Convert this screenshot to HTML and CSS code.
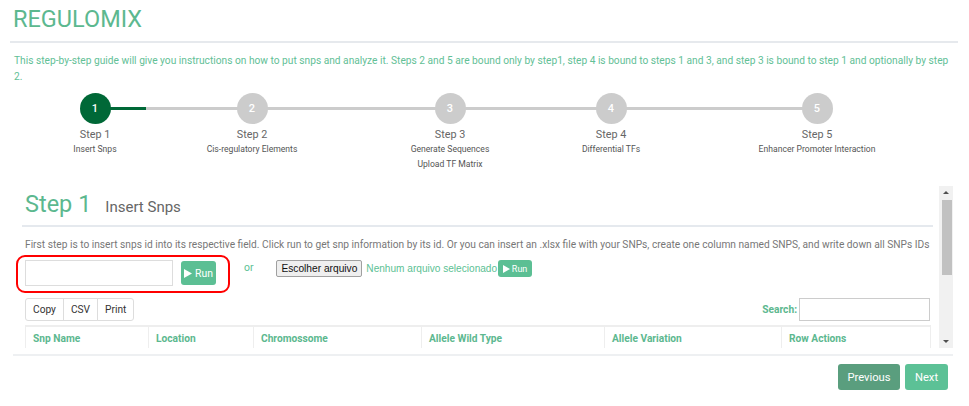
FILE: index.html
```html
<!DOCTYPE html>
<html lang="en">
<head>
<meta charset="utf-8">
<title>REGULOMIX</title>
<link rel="stylesheet" href="styles.css">
</head>
<body>
<div class="page">
  <h1 class="brand">REGULOMIX</h1>
  <hr class="rule">
  <p class="intro">This step-by-step guide will give you instructions on how to put snps and analyze it. Steps 2 and 5 are bound only by step1, step 4 is bound to steps 1 and 3, and step 3 is bound to step 1 and optionally by step 2.</p>

  <div class="stepper">
    <div class="track"><div class="track-fill"></div></div>
    <div class="step is-active">
      <div class="step-num">1</div>
      <div class="step-title">Step 1</div>
      <div class="step-sub">Insert Snps</div>
    </div>
    <div class="step">
      <div class="step-num">2</div>
      <div class="step-title">Step 2</div>
      <div class="step-sub">Cis-regulatory Elements</div>
    </div>
    <div class="step">
      <div class="step-num">3</div>
      <div class="step-title">Step 3</div>
      <div class="step-sub">Generate Sequences<br>Upload TF Matrix</div>
    </div>
    <div class="step">
      <div class="step-num">4</div>
      <div class="step-title">Step 4</div>
      <div class="step-sub">Differential TFs</div>
    </div>
    <div class="step">
      <div class="step-num">5</div>
      <div class="step-title">Step 5</div>
      <div class="step-sub">Enhancer Promoter Interaction</div>
    </div>
  </div>

  <div class="panel">
    <div class="panel-scroll">
      <div class="panel-inner">
        <div class="panel-head">
          <h2 class="panel-title">Step 1</h2>
          <span class="panel-sub">Insert Snps</span>
        </div>
        <p class="panel-text">First step is to insert snps id into its respective field. Click run to get snp information by its id. Or you can insert an .xlsx file with your SNPs, create one column named SNPS, and write down all SNPs IDs</p>

        <div class="snp-row">
          <div class="snp-box">
            <input class="snp-input" type="text">
            <button class="run-btn" type="button"><svg class="play" viewBox="0 0 8 9" width="8" height="9"><polygon points="0,0 8,4.5 0,9" fill="#fff"/></svg>Run</button>
          </div>
          <div class="file-group">
            <span class="or">or</span>
            <button class="file-btn" type="button">Escolher arquivo</button>
            <span class="file-name">Nenhum arquivo selecionado</span>
            <button class="run-btn run-btn-sm" type="button"><svg class="play" viewBox="0 0 8 9" width="7" height="8"><polygon points="0,0 8,4.5 0,9" fill="#fff"/></svg>Run</button>
          </div>
        </div>

        <div class="toolbar">
          <div class="btn-group">
            <button class="tool-btn" type="button">Copy</button>
            <button class="tool-btn" type="button">CSV</button>
            <button class="tool-btn" type="button">Print</button>
          </div>
          <label class="search">Search:<input class="search-input" type="text"></label>
        </div>

        <table class="snp-table">
          <colgroup>
            <col class="c1"><col class="c2"><col class="c3"><col class="c4"><col class="c5"><col class="c6">
          </colgroup>
          <thead>
            <tr>
              <th>Snp Name</th>
              <th>Location</th>
              <th>Chromossome</th>
              <th>Allele Wild Type</th>
              <th>Allele Variation</th>
              <th>Row Actions</th>
            </tr>
          </thead>
        </table>
      </div>
    </div>
    <div class="scrollbar" aria-hidden="true">
      <div class="sb-arrow sb-up"></div>
      <div class="sb-track"><div class="sb-thumb"></div></div>
      <div class="sb-arrow sb-down"></div>
    </div>
  </div>

  <div class="panel-foot">
    <button class="nav-btn nav-prev" type="button">Previous</button>
    <button class="nav-btn nav-next" type="button">Next</button>
  </div>
</div>
</body>
</html>
```

FILE: styles.css
```css
* { box-sizing: border-box; }
html, body { margin: 0; padding: 0; background: #fff; }
body { font-family: Roboto, "Liberation Sans", sans-serif; color: #555; }

.page { padding: 5px 11px 0 10px; }

.brand {
  margin: 0;
  padding-left: 3px;
  font-size: 23.5px;
  font-weight: 400;
  line-height: 28px;
  color: #5cb88f;
}

.rule { margin: 8px 0 0; border: 0; height: 2px; background: #e6e9ed; }

.intro {
  margin: 10px 4px 0;
  font-size: 10.2px;
  line-height: 16px;
  color: #62c096;
}

/* stepper */
.stepper {
  position: relative;
  display: flex;
  align-items: flex-start;
  margin-top: 8px;
}
.track {
  position: absolute;
  left: 85px;
  top: 14px;
  width: 722px;
  height: 3px;
  background: #cccccc;
}
.track-fill { width: 51px; height: 3px; background: #006837; }
.step {
  position: relative;
  z-index: 1;
  flex: none;
  width: 140px;
  display: flex;
  flex-direction: column;
  align-items: center;
}
.step:nth-child(2) { margin-left: 15px; }
.step:nth-child(3) { margin-left: 17px; }
.step:nth-child(4) { margin-left: 58px; }
.step:nth-child(5) { margin-left: 21px; }
.step:nth-child(6) { margin-left: 66px; }
.step-num {
  width: 31px;
  height: 31px;
  border-radius: 50%;
  background: #cccccc;
  color: #fff;
  font-size: 11px;
  font-weight: 500;
  display: flex;
  align-items: center;
  justify-content: center;
}
.step.is-active .step-num { background: #006837; }
.step-title { margin-top: 3px; font-size: 10.8px; line-height: 15px; color: #666; }
.step-sub { font-size: 8.6px; line-height: 15px; color: #555; text-align: center; }

/* panel */
.panel {
  display: flex;
  margin: 14px 5px 0 3px;
  padding-bottom: 6px;
  border-bottom: 2px solid #eef0f2;
}
.panel-scroll { flex: 1; height: 162px; overflow: hidden; }
.panel-inner { min-height: 289px; }

.scrollbar {
  flex: none;
  display: flex;
  flex-direction: column;
  width: 14px;
  height: 162px;
  margin-left: 1px;
  background: #f1f1f1;
}
.sb-arrow { position: relative; flex: none; height: 14px; }
.sb-arrow::before {
  content: "";
  position: absolute;
  left: 4px;
  top: 5px;
  border-left: 3px solid transparent;
  border-right: 3px solid transparent;
}
.sb-up::before { border-bottom: 3px solid #505050; }
.sb-down::before { top: 6px; border-top: 3px solid #505050; }
.sb-track { flex: 1; padding: 0 1px 0 3px; }
.sb-thumb { width: 10px; height: 75px; background: #c1c1c1; }

.panel-head {
  display: flex;
  align-items: baseline;
  margin: 0 5px 0 9px;
  padding: 3px 3px 6px;
  border-bottom: 2px solid #e5e9ee;
}
.panel-title {
  margin: 0;
  font-size: 23.5px;
  font-weight: 400;
  line-height: 30px;
  color: #5cb88f;
}
.panel-sub { margin-left: 14px; font-size: 15px; color: #666; }

.panel-text {
  margin: 10px 0 0 12px;
  font-size: 10.2px;
  line-height: 15px;
  color: #777;
}

.snp-row { display: flex; align-items: flex-start; margin-top: 3px; }
.snp-box {
  display: flex;
  align-items: flex-start;
  gap: 8px;
  margin-left: 3px;
  padding: 3px 12px 5px 7px;
  border: 2px solid #ff0000;
  border-radius: 9px;
}
.snp-input {
  width: 148px;
  height: 26px;
  margin: 0;
  border: 1px solid #dddddd;
  border-radius: 0;
  background: #fff;
}
.run-btn {
  display: flex;
  align-items: center;
  justify-content: center;
  gap: 3px;
  width: 35px;
  height: 24px;
  margin: 1px 0 0;
  padding: 0;
  border: 0;
  border-radius: 3px;
  background: #5cbf94;
  color: #fff;
  font-family: Roboto, "Liberation Sans", sans-serif;
  font-size: 10.4px;
}
.run-btn-sm { width: 34px; height: 17px; margin: 0 0 0 1px; font-size: 9px; gap: 2px; }

.file-group { display: flex; align-items: flex-start; margin: 5px 0 0 14px; }
.or { font-size: 10.4px; line-height: 15px; color: #5cbf94; }
.file-btn {
  height: 17px;
  margin: 0 0 0 23px;
  padding: 0 4px;
  border: 1px solid #a0a0a0;
  border-radius: 2px;
  background: #efefef;
  color: #111;
  font-family: "Liberation Sans", Arial, sans-serif;
  font-size: 10.2px;
  font-weight: 400;
}
.file-name {
  margin-left: 4px;
  font-family: "Liberation Sans", Arial, sans-serif;
  font-size: 10.1px;
  line-height: 17px;
  color: #5cbf94;
}

.toolbar {
  display: flex;
  justify-content: space-between;
  align-items: center;
  margin: 5px 8px 0 12px;
}
.btn-group { display: flex; }
.tool-btn {
  height: 23px;
  margin: 0 0 0 -1px;
  padding: 0 7px;
  border: 1px solid #dddddd;
  background: #fff;
  color: #333;
  font-family: Roboto, "Liberation Sans", sans-serif;
  font-size: 10.2px;
}
.tool-btn:first-child { margin-left: 0; border-radius: 3px 0 0 3px; }
.tool-btn:last-child { border-radius: 0 3px 3px 0; }
.search {
  display: flex;
  align-items: center;
  font-size: 10.2px;
  font-weight: 700;
  color: #5cb88f;
}
.search-input {
  width: 131px;
  height: 23px;
  margin: 0 0 0 2px;
  border: 1px solid #cccccc;
}

.snp-table {
  width: 905px;
  margin: 4px 0 0 12px;
  border-collapse: collapse;
  table-layout: fixed;
}
.c1 { width: 123px; }
.c2 { width: 105px; }
.c3 { width: 168px; }
.c4 { width: 183px; }
.c5 { width: 177px; }
.c6 { width: 149px; }
.snp-table th {
  padding: 4px 7px 8px;
  border: 1px solid #eeeeee;
  border-top: 2px solid #eeeeee;
  text-align: left;
  font-size: 10.2px;
  line-height: 15px;
  font-weight: 700;
  color: #5cb88f;
}

.panel-foot {
  display: flex;
  justify-content: flex-end;
  gap: 5px;
  margin: 8px 10px 0 0;
}
.nav-btn {
  height: 26px;
  padding: 0 8px;
  border: 0;
  border-radius: 3px;
  color: #fff;
  font-family: Roboto, "Liberation Sans", sans-serif;
  font-size: 11.2px;
}
.nav-prev { width: 62px; background: #5a9e7e; }
.nav-next { width: 43px; background: #5cc196; }
```
